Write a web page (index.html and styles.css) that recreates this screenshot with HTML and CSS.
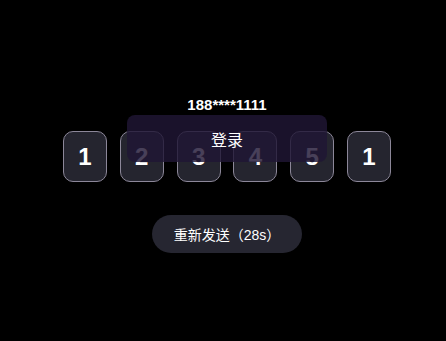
FILE: index.html
```html
<!DOCTYPE html>
<html lang="zh-CN">
<head>
<meta charset="utf-8">
<title>验证码</title>
<link rel="stylesheet" href="styles.css">
</head>
<body>
<main class="page">
  <div class="phone">188****1111</div>
  <div class="code-wrap">
    <div class="code-row">
      <div class="cell">1</div>
      <div class="cell">2</div>
      <div class="cell">3</div>
      <div class="cell">4</div>
      <div class="cell">5</div>
      <div class="cell">1</div>
    </div>
    <div class="login-overlay">登录</div>
  </div>
  <button class="resend">重新发送（28s）</button>
</main>
</body>
</html>
```
FILE: styles.css
```css
html, body {
  margin: 0;
  padding: 0;
  background: #000;
}
body {
  width: 446px;
  height: 341px;
  overflow: hidden;
  font-family: "Liberation Sans", "Noto Sans CJK SC", sans-serif;
  color: #fff;
}
.page {
  box-sizing: border-box;
  padding: 96px 0 0 8px;
  display: flex;
  flex-direction: column;
  align-items: center;
}
.phone {
  font-size: 15px;
  line-height: 18px;
  font-weight: bold;
  color: #fff;
}
.code-wrap {
  position: relative;
  margin-top: 17px;
}
.code-row {
  display: flex;
  gap: 12.8px;
}
.cell {
  box-sizing: border-box;
  width: 44px;
  height: 51px;
  border: 1px solid #8c8799;
  border-radius: 10px;
  background: #25252f;
  display: flex;
  align-items: center;
  justify-content: center;
  font-size: 24px;
  font-weight: bold;
  color: #fff;
}
.login-overlay {
  position: absolute;
  top: -16px;
  left: 50%;
  transform: translateX(-50%);
  width: 200px;
  height: 47px;
  border-radius: 8px;
  background: rgba(32, 22, 52, 0.82);
  display: flex;
  align-items: center;
  justify-content: center;
  font-family: "Noto Sans CJK SC", sans-serif;
  font-size: 16px;
  color: #fff;
}
.resend {
  margin-top: 33px;
  width: 150px;
  height: 38px;
  border: none;
  border-radius: 19px;
  background: #262631;
  color: #fff;
  font-family: "Liberation Sans", "Noto Sans CJK SC", sans-serif;
  font-size: 14px;
  padding: 0;
}
```
